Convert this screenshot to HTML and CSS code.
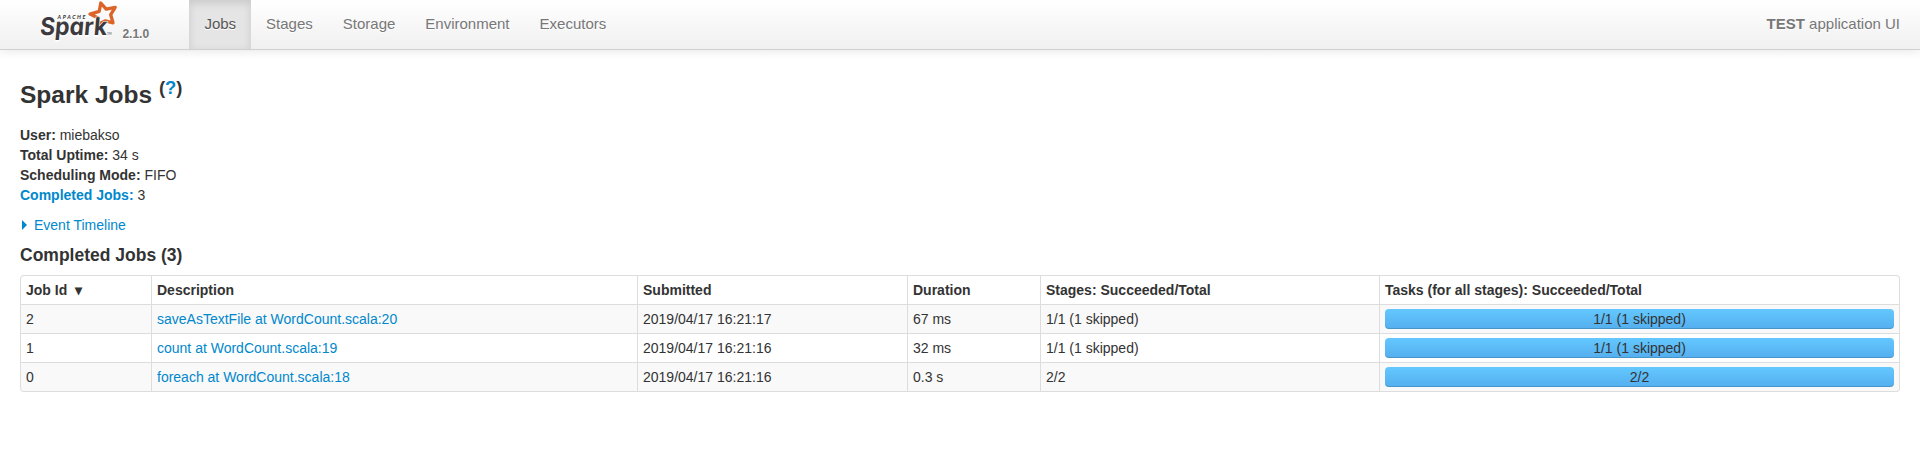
FILE: index.html
```html
<!DOCTYPE html>
<html lang="en">
<head>
<meta charset="utf-8">
<title>Spark Jobs</title>
<link rel="stylesheet" href="styles.css">
</head>
<body>
<header class="navbar">
  <a class="brand">
    <svg class="logo" width="76" height="42" viewBox="0 0 76 42" role="img" aria-label="Apache Spark">
      <path class="logo-star" d="M60.8 3 L66.2 9.2 L75.2 7.4 L70.7 14.7 L73 22.8 L65.5 20.8 L58.3 24.3 L58.2 17.9 L50 14.1 L59.2 11.4 Z"/>
      <text class="logo-word" x="0" y="0" textLength="67" lengthAdjust="spacingAndGlyphs" transform="translate(-.5 35.4) skewX(-5)">Spark</text>
      <text class="logo-apache" x="17.5" y="18.7" textLength="28">APACHE</text>
      <text class="logo-tm" x="67" y="35.3">TM</text>
    </svg>
    <span class="version">2.1.0</span>
  </a>
  <nav class="nav">
    <a class="active">Jobs</a>
    <a>Stages</a>
    <a>Storage</a>
    <a>Environment</a>
    <a>Executors</a>
  </nav>
  <p class="app-name"><strong>TEST</strong> application UI</p>
</header>
<main class="container">
  <h3>Spark Jobs <sup>(<a>?</a>)</sup></h3>
  <ul class="summary">
    <li><strong>User:</strong> miebakso</li>
    <li><strong>Total Uptime:</strong> 34 s</li>
    <li><strong>Scheduling Mode:</strong> FIFO</li>
    <li><a><strong>Completed Jobs:</strong></a> 3</li>
  </ul>
  <a class="timeline"><span class="arrow"></span>Event Timeline</a>
  <h4>Completed Jobs (3)</h4>
  <table class="jobs">
    <colgroup><col class="c-id"><col class="c-desc"><col class="c-sub"><col class="c-dur"><col class="c-stages"><col></colgroup>
    <thead>
      <tr><th>Job Id <span class="sort">▾</span></th><th>Description</th><th>Submitted</th><th>Duration</th><th>Stages: Succeeded/Total</th><th>Tasks (for all stages): Succeeded/Total</th></tr>
    </thead>
    <tbody>
      <tr><td>2</td><td><a>saveAsTextFile at WordCount.scala:20</a></td><td>2019/04/17 16:21:17</td><td>67 ms</td><td>1/1 (1 skipped)</td><td><div class="progress">1/1 (1 skipped)</div></td></tr>
      <tr><td>1</td><td><a>count at WordCount.scala:19</a></td><td>2019/04/17 16:21:16</td><td>32 ms</td><td>1/1 (1 skipped)</td><td><div class="progress">1/1 (1 skipped)</div></td></tr>
      <tr><td>0</td><td><a>foreach at WordCount.scala:18</a></td><td>2019/04/17 16:21:16</td><td>0.3 s</td><td>2/2</td><td><div class="progress">2/2</div></td></tr>
    </tbody>
  </table>
</main>
</body>
</html>
```

FILE: styles.css
```css
* { box-sizing: border-box; }
body {
  margin: 0;
  background: #fff;
  color: #333;
  font: 14px/20px "Liberation Sans", Arial, sans-serif;
}
a { color: #08c; text-decoration: none; }
.navbar {
  display: flex;
  height: 50px;
  padding: 0 20px;
  background: linear-gradient(#fff, #f0f0f0);
  border-bottom: 1px solid #d0d0d0;
  box-shadow: 0 1px 10px rgba(0, 0, 0, .1);
  font-size: 15px;
  color: #777;
  text-shadow: 0 1px 0 #fff;
}
.brand { display: flex; flex: none; width: 169px; padding-left: 20px; color: #777; }
.logo { display: block; flex: none; overflow: visible; }
.logo-star { fill: none; stroke: #dc6428; stroke-width: 3.3; stroke-linejoin: round; }
.logo-word {
  font: 700 24.5px Inter, Lato, sans-serif;
  font-feature-settings: "cv11" 1;
  fill: #3c3a3e;
  paint-order: stroke;
  stroke: #f8f8f8;
  stroke-width: 1px;
}
.logo-apache { font: italic 900 5.4px Lato, sans-serif; fill: #3c3a3e; }
.logo-tm { font: 3px Lato, sans-serif; fill: #3c3a3e; }
.version { padding: 24px 0 0 6.4px; font-size: 12px; font-weight: bold; }
.nav { display: flex; padding-left: .4px; }
.nav a { padding: 14px 15px 15px; color: #777; }
.nav .active {
  color: #555;
  background: #e5e5e5;
  box-shadow: inset 0 3px 8px rgba(0, 0, 0, .125);
}
.app-name { margin: 14px 0 0 auto; }
.container { padding: 0 20px; }
h3 { margin: 25px 0 10px; font-size: 24.5px; line-height: 40px; }
sup { position: relative; top: -.5em; font-size: 18.4px; line-height: 0; vertical-align: baseline; }
.summary { margin: 0 0 10px; padding: 0; list-style: none; }
.timeline { display: flex; align-items: center; }
.arrow {
  margin: 0 7px 0 2px;
  border: solid transparent;
  border-width: 5px 0 5px 5px;
  border-left-color: #08c;
}
h4 { margin: 10px 0; font-size: 17.5px; line-height: 20px; }
.jobs {
  width: 100%;
  table-layout: fixed;
  border: 1px solid #ddd;
  border-left: 0;
  border-collapse: separate;
  border-spacing: 0;
  border-radius: 4px;
}
.c-id { width: 131px; }
.c-desc { width: 486px; }
.c-sub { width: 270px; }
.c-dur { width: 133px; }
.c-stages { width: 339px; }
th, td { padding: 4px 5px; border-left: 1px solid #ddd; text-align: left; vertical-align: middle; }
th { height: 28px; padding-block: 0; }
td { border-top: 1px solid #ddd; }
tbody tr:nth-child(odd) td { background: #f9f9f9; }
th:first-child { border-top-left-radius: 4px; }
tr:last-child td:first-child { border-bottom-left-radius: 4px; }
tr:last-child td:last-child { border-bottom-right-radius: 4px; }
.sort { margin-left: 4px; }
.progress {
  height: 20px;
  border-radius: 4px;
  background: linear-gradient(#64c8ff, #54aeee);
  box-shadow: inset 0 -1px 0 rgba(0, 0, 0, .15);
  text-align: center;
}
```
